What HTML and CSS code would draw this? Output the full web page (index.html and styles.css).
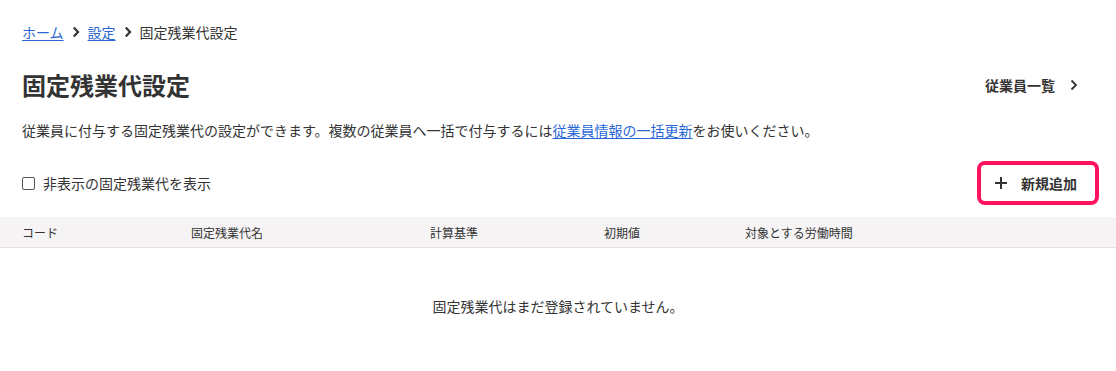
FILE: index.html
```html
<!DOCTYPE html>
<html lang="ja">
<head>
<meta charset="utf-8">
<title>固定残業代設定</title>
<link rel="stylesheet" href="styles.css">
</head>
<body>
<div class="content">
  <nav class="breadcrumb">
    <a href="#" class="link">ホーム</a>
    <svg class="crumb-sep" width="8" height="12" viewBox="0 0 8 12"><path d="M1.8 1.5 L6 6 L1.8 10.5" fill="none" stroke="#333" stroke-width="2.2"/></svg>
    <a href="#" class="link">設定</a>
    <svg class="crumb-sep" width="8" height="12" viewBox="0 0 8 12"><path d="M1.8 1.5 L6 6 L1.8 10.5" fill="none" stroke="#333" stroke-width="2.2"/></svg>
    <span>固定残業代設定</span>
  </nav>

  <div class="title-row">
    <h1 class="title">固定残業代設定</h1>
    <a href="#" class="side-link">従業員一覧
      <svg class="side-chevron" width="8" height="12" viewBox="0 0 8 12"><path d="M1.5 1.5 L6 6 L1.5 10.5" fill="none" stroke="#333" stroke-width="1.8"/></svg>
    </a>
  </div>

  <p class="desc">従業員に付与する固定残業代の設定ができます。複数の従業員へ一括で付与するには<a href="#" class="link">従業員情報の一括更新</a>をお使いください。</p>

  <div class="toolbar">
    <label class="check">
      <span class="box"></span>
      <span>非表示の固定残業代を表示</span>
    </label>
    <button class="add-btn">
      <svg width="12" height="12" viewBox="0 0 12 12"><path d="M6 0 V12 M0 6 H12" stroke="#333" stroke-width="2"/></svg>
      <span>新規追加</span>
    </button>
  </div>
</div>

<div class="table-head">
  <div class="col c1">コード</div>
  <div class="col c2">固定残業代名</div>
  <div class="col c3">計算基準</div>
  <div class="col c4">初期値</div>
  <div class="col c5">対象とする労働時間</div>
</div>
<p class="empty">固定残業代はまだ登録されていません。</p>
</body>
</html>
```
FILE: styles.css
```css
* { box-sizing: border-box; }
body {
  margin: 0;
  font-family: "Noto Sans CJK JP", "Noto Sans", sans-serif;
  color: #333;
  background: #fff;
  font-size: 14px;
}
.content {
  padding: 22px 17px 0 22px;
}
.link {
  color: #2a67d4;
  text-decoration: underline;
  text-underline-offset: 2px;
}
.breadcrumb {
  display: flex;
  align-items: center;
  height: 20px;
  line-height: 20px;
  font-size: 14px;
}
.crumb-sep {
  display: block;
  margin: 0 8px 0 8px;
}
.title-row {
  display: flex;
  align-items: center;
  justify-content: space-between;
  margin-top: 27px;
  height: 32px;
  padding-right: 21px;
}
.title {
  margin: 0;
  font-size: 24px;
  line-height: 32px;
  font-weight: 700;
}
.side-link {
  display: flex;
  align-items: center;
  gap: 15px;
  color: #333;
  text-decoration: none;
  font-weight: 700;
  font-size: 14px;
}
.side-chevron { display: block; }
.desc {
  margin: 19px 0 0;
  font-size: 14px;
  line-height: 20px;
}
.toolbar {
  display: flex;
  align-items: center;
  justify-content: space-between;
  margin-top: 21px;
  height: 44px;
}
.check {
  display: flex;
  align-items: center;
  gap: 8px;
  font-size: 14px;
  line-height: 20px;
}
.box {
  width: 13px;
  height: 13px;
  border: 1px solid #555;
  border-radius: 2px;
  background: #fff;
}
.add-btn {
  display: flex;
  align-items: center;
  gap: 14px;
  height: 44px;
  padding: 0 18px 0 14px;
  border: 4px solid #ff135e;
  border-radius: 8px;
  background: #fff;
  font-family: inherit;
  font-size: 14px;
  font-weight: 700;
  color: #333;
}
.add-btn svg { display: block; }
.table-head {
  display: grid;
  grid-template-columns: 169px 239px 174px 141px 1fr;
  margin-top: 12px;
  height: 31px;
  padding-left: 22px;
  background: #f5f3f3;
  border-bottom: 1px solid #e3e1e1;
  align-items: center;
  font-size: 12px;
}
.empty {
  margin: 48px 0 0;
  text-align: center;
  font-size: 14px;
  line-height: 20px;
}
```
